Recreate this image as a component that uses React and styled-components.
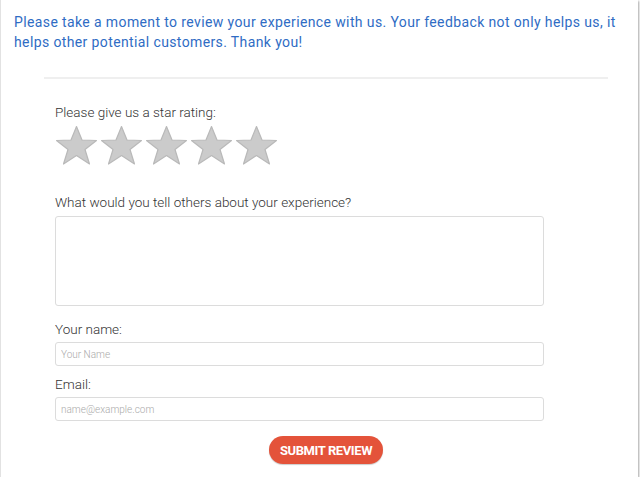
import React from "react";
import styled, { createGlobalStyle } from "styled-components";

const Global = createGlobalStyle`
  html, body { margin: 0; padding: 0; background: #fff; }
  body { font-family: Roboto, "Liberation Sans", sans-serif; }
  * { box-sizing: border-box; }
`;

const Frame = styled.div`
  width: 638px;
  height: 477px;
  background: #fff;
  border-left: 1px solid #e2e2e2;
  box-shadow: 1px 1px 2px rgba(0, 0, 0, 0.35);
  display: flex;
  flex-direction: column;
`;

const Intro = styled.p`
  margin: 0;
  padding: 12px 10px 0 13px;
  color: #2f6cc4;
  font-size: 14px;
  letter-spacing: 0.38px;
  line-height: 20px;
`;

const Divider = styled.hr`
  margin: 25px 30px 0 43px;
  border: none;
  height: 2px;
  background: #efefef;
`;

const Form = styled.form`
  display: flex;
  flex-direction: column;
  padding: 25px 0 0 54px;
  width: 596px;
`;

const Label = styled.label`
  display: block;
  font-size: 13.5px;
  font-weight: 300;
  color: #333;
  line-height: 16px;
  margin-top: ${(p) => p.$top || 0}px;
`;

const Stars = styled.div`
  display: flex;
  gap: 2px;
  margin-top: 5px;
`;

const TextArea = styled.textarea`
  display: block;
  width: 489px;
  height: 90px;
  margin-top: 6px;
  border: 1px solid #dcdcdc;
  border-radius: 3px;
  resize: none;
  outline: none;
`;

const Input = styled.input`
  display: block;
  width: 489px;
  height: 24px;
  margin-top: 5px;
  border: 1px solid #dcdcdc;
  border-radius: 3px;
  padding: 0 5px;
  font-family: Roboto, "Liberation Sans", sans-serif;
  font-size: 10px;
  font-weight: 300;
  outline: none;
  &::placeholder { color: #aaa; }
`;

const ButtonRow = styled.div`
  display: flex;
  justify-content: center;
  margin-top: 15px;
`;

const Submit = styled.button`
  height: 28px;
  padding: 0 11px;
  border: none;
  border-radius: 14px;
  background: #e4533a;
  color: #fff;
  font-family: Roboto, "Liberation Sans", sans-serif;
  font-weight: 700;
  font-size: 13px;
  letter-spacing: -0.4px;
  box-shadow: 0 1px 1px rgba(0, 0, 0, 0.2);
`;

const Star = () => (
  <svg width="43" height="41" viewBox="0 0 43 41">
    <polygon
      points="21.5,1.5 27,15 41.5,15.5 30,24.5 34.5,39 21.5,30.5 8.5,39 13,24.5 1.5,15.5 16,15"
      fill="#cbcbcb"
      stroke="#b9b9b9"
      strokeWidth="1.2"
      strokeLinejoin="round"
    />
  </svg>
);

export default function App() {
  return (
    <>
      <Global />
      <Frame>
        <Intro>
          Please take a moment to review your experience with us. Your feedback not only helps us, it
          helps other potential customers. Thank you!
        </Intro>
        <Divider />
        <Form onSubmit={(e) => e.preventDefault()}>
          <Label>Please give us a star rating:</Label>
          <Stars>
            {[0, 1, 2, 3, 4].map((i) => (
              <Star key={i} />
            ))}
          </Stars>
          <Label $top={28}>What would you tell others about your experience?</Label>
          <TextArea />
          <Label $top={15}>Your name:</Label>
          <Input placeholder="Your Name" />
          <Label $top={10}>Email:</Label>
          <Input placeholder="name@example.com" />
          <ButtonRow>
            <Submit type="submit">SUBMIT REVIEW</Submit>
          </ButtonRow>
        </Form>
      </Frame>
    </>
  );
}
